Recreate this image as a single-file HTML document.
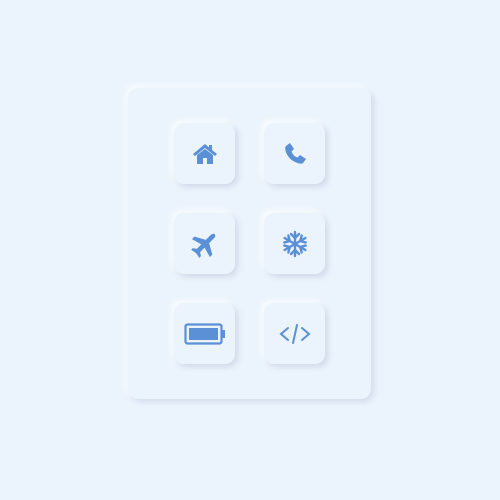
<!DOCTYPE html><html><head><style>
body{margin:0;width:500px;height:500px;background:#ebf3fc;position:relative;overflow:hidden}
.card{position:absolute;left:128px;top:88px;width:243px;height:311px;border-radius:10px;background:#ebf3fc;box-shadow:3px 3px 6px #d3dde9,-3px -3px 6px #f9fcff}
.b{position:absolute;width:61px;height:61px;border-radius:10px;background:#ebf3fc;box-shadow:3px 3px 6px #d1dbe8,-3px -3px 6px #fafdff;display:flex;align-items:center;justify-content:center}
svg{display:block}
</style></head><body>
<div class="card"></div>
<div class="b" style="left:174px;top:123px"><svg width="26" height="22" viewBox="0 0 26 22"><path d="M13 1 L1 11 L3 13 L13 5 L23 13 L25 11 L20 7 V2 H17 V4.5 Z M5 12 V21 H11 V15 H15 V21 H21 V12 L13 6 Z" fill="#5b8fd6"/></svg></div>
<div class="b" style="left:264px;top:123px"><svg width="24" height="24" viewBox="0 0 24 24"><path d="M3 4 L7 1 L11 7 L8.5 9.5 C10 13 11.5 14.5 14.5 15.5 L17 13 L23 17 L20 21 C18 23 10 20 6.5 16 C3 12 1 6 3 4 Z" fill="#5b8fd6"/></svg></div>
<div class="b" style="left:174px;top:213px"><svg width="30" height="30" viewBox="0 0 26 26"><g transform="rotate(45 13 13)"><path d="M13 1 C14.5 1 15 3 15 4 V10 L24 15 V18 L15 15.5 V21 L18 23 V25 L13 24 L8 25 V23 L11 21 V15.5 L2 18 V15 L11 10 V4 C11 3 11.5 1 13 1 Z" fill="#5b8fd6"/></g></svg></div>
<div class="b" style="left:264px;top:213px"><svg width="28" height="28" viewBox="0 0 28 28" stroke="#5b8fd6" stroke-width="2.4" fill="none" stroke-linecap="round"><g id="a"><path d="M14 2 V26 M10 4 L14 8 L18 4 M10 24 L14 20 L18 24"/></g><use href="#a" transform="rotate(60 14 14)"/><use href="#a" transform="rotate(-60 14 14)"/></svg></div>
<div class="b" style="left:174px;top:303px"><svg width="42" height="22" viewBox="0 0 42 22"><rect x="1.5" y="1.5" width="36" height="19" rx="2" fill="none" stroke="#5b8fd6" stroke-width="2.2"/><rect x="5" y="5" width="29" height="12" fill="#5b8fd6"/><rect x="38" y="7" width="3" height="8" fill="#5b8fd6"/></svg></div>
<div class="b" style="left:264px;top:303px"><svg width="32" height="24" viewBox="0 0 32 24" stroke="#5b8fd6" stroke-width="2" fill="none" stroke-linecap="round"><path d="M9 6 L2 12 L9 18 M23 6 L30 12 L23 18 M18 3 L14 21"/></svg></div>
</body></html>
